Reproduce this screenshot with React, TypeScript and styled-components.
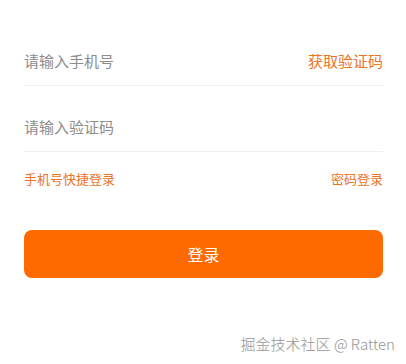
import React from "react";
import styled, { createGlobalStyle } from "styled-components";

const Global = createGlobalStyle`
  html, body { margin: 0; padding: 0; background: #fff; }
  body { font-family: "Noto Sans CJK SC", "Liberation Sans", sans-serif; }
`;

const Page = styled.div`
  position: relative;
  width: 406px;
  height: 364px;
  box-sizing: border-box;
  padding: 20px 23px 0 24px;
  display: flex;
  flex-direction: column;
  background: #fff;
`;

const Field = styled.div`
  display: flex;
  align-items: center;
  justify-content: space-between;
  padding: 31px 0 14px;
  border-bottom: 1px solid #f0f0f0;
`;

const Placeholder = styled.span`
  font-size: 15px;
  line-height: 20px;
  color: #8c8c8c;
`;

const CodeLink = styled.span`
  font-size: 15px;
  line-height: 20px;
  color: #ec7423;
`;

const LinksRow = styled.div`
  display: flex;
  justify-content: space-between;
  margin-top: 18px;
`;

const SmallLink = styled.span`
  font-size: 13px;
  line-height: 18px;
  color: #ec7423;
`;

const Button = styled.button`
  margin-top: 42px;
  height: 48px;
  border: none;
  border-radius: 8px;
  background: #ff6a00;
  color: #fff;
  font-family: inherit;
  font-size: 16px;
  padding: 0;
`;

const Watermark = styled.div`
  position: absolute;
  right: 11px;
  bottom: 10px;
  font-size: 15px;
  line-height: 20px;
  font-weight: 300;
  color: #9a9a9a;
  text-shadow: 0 0 1px rgba(0, 0, 0, 0.08);
`;

export default function App() {
  return (
    <>
      <Global />
      <Page>
        <Field>
          <Placeholder>请输入手机号</Placeholder>
          <CodeLink>获取验证码</CodeLink>
        </Field>
        <Field>
          <Placeholder>请输入验证码</Placeholder>
        </Field>
        <LinksRow>
          <SmallLink>手机号快捷登录</SmallLink>
          <SmallLink>密码登录</SmallLink>
        </LinksRow>
        <Button>登录</Button>
        <Watermark>掘金技术社区 @ Ratten</Watermark>
      </Page>
    </>
  );
}
